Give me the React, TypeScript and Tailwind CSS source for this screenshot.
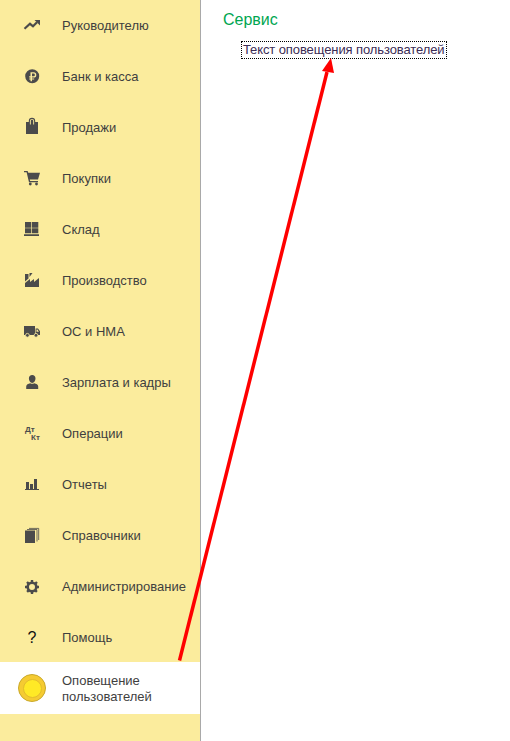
const ICON = "#4b4b4b";
const PANEL = "#fbec9d";

function Svg({ children }: { children: React.ReactNode }) {
  return (
    <svg className="overflow-visible" viewBox="0 0 16 16" width="16" height="16" fill={ICON}>
      {children}
    </svg>
  );
}

const icons: Record<string, React.ReactNode> = {
  trend: (
    <Svg>
      <path d="M0.500 10.800 L6 5.800 L9 8.300 L13 4.300" fill="none" stroke={ICON} strokeWidth="2.200" />
      <path d="M10.500 2 H16 V7.500 Z" />
    </Svg>
  ),
  ruble: (
    <Svg>
      <g transform="translate(0.200 -0.700)">
        <path
          fillRule="evenodd"
          d="M8 1a7 7 0 1 0 0 14A7 7 0 0 0 8 1ZM6.300 4h3.200a2.600 2.600 0 0 1 0 5.200H7.800v.9h2.200v1.100H7.800V13H6.300v-1.800H5v-1.100h1.300v-.9H5V7.900h1.300ZM7.800 5.300v2.600h1.600a1.300 1.300 0 0 0 0-2.600Z"
        />
      </g>
    </Svg>
  ),
  bag: (
    <Svg>
      <path
        fillRule="evenodd"
        d="M2 2h2.800V1a3.200 3.200 0 0 1 6.400 0v1H14v12H2ZM5.900 2v2.500h.9V1a1.200 1.200 0 0 1 2.400 0v3.500h.9V1a2.100 2.100 0 0 0-4.200 0Z"
      />
    </Svg>
  ),
  cart: (
    <Svg>
      <path d="M0 0h3.600L4.300 1.800H16L14 8.500H5.800L6.200 10H14v1.200H5L2.600 1.200H0Z" />
      <circle cx="6.300" cy="13" r="1.400" />
      <circle cx="12.500" cy="13" r="1.400" />
    </Svg>
  ),
  stock: (
    <Svg>
      <path d="M1 0h6.300v5.700H1ZM8 0h6.300v5.700H8ZM1 6.300h6.300v5H1ZM8 6.300h6.300v5H8ZM0 12.300h15V14H0Z" />
    </Svg>
  ),
  factory: (
    <Svg>
      <path d="M1 1h3.500v4.500L1 8.500ZM5.500 0h3L5.500 4ZM1 14v-4l5-4v3l4-3v3l5-4v9Z" />
    </Svg>
  ),
  truck: (
    <Svg>
      <path d="M0 2h11v9H0Z" />
      <path
        fillRule="evenodd"
        d="M11.600 4.500H14l2 2.800V11h-4.400ZM12.500 5.500v2.300h2.400L13.400 5.500Z"
      />
      <circle cx="3.400" cy="11.300" r="1.900" stroke={PANEL} strokeWidth="0.800" />
      <circle cx="12" cy="11.300" r="1.900" stroke={PANEL} strokeWidth="0.800" />
    </Svg>
  ),
  person: (
    <Svg>
      <g transform="translate(0.200 -1)">
        <path d="M8 1c2 0 3.300 1.500 3.300 3.500S10 9 8 9 4.700 6.500 4.700 4.500 6 1 8 1ZM2 15v-2.500C2 10.500 4 10 6 9.300c1.200.7 2.800.7 4 0 2 .7 4 1.200 4 3.200V15Z" />
      </g>
    </Svg>
  ),
  chart: (
    <Svg>
      <path d="M2 5h3v7H2ZM6 7h3v5H6ZM10 2h3v10h-3ZM1 12h14v1H1Z" />
    </Svg>
  ),
  books: (
    <Svg>
      <path d="M1 2.500h10v12.500H1Z" />
      <path d="M3 1.500h10V13.500" fill="none" stroke={ICON} strokeWidth="0.800" />
      <path d="M5 0.400h9.700V12" fill="none" stroke={ICON} strokeWidth="0.800" />
    </Svg>
  ),
  gear: (
    <Svg>
      <circle cx="8" cy="8" r="4.300" fill="none" stroke={ICON} strokeWidth="2.600" />
      <path
        d="M8 1v14M1 8h14M3 3l10 10M13 3L3 13"
        stroke={ICON}
        strokeWidth="2.400"
        strokeDasharray="2.600 8.800"
        fill="none"
      />
    </Svg>
  ),
};

function DtKt() {
  return (
    <div className="relative w-4 h-4 font-bold text-[8px] leading-none text-[#4b4b4b]">
      <span className="absolute left-px top-0">Дт</span>
      <span className="absolute left-[7px] top-[8px]">Кт</span>
    </div>
  );
}

function Coin() {
  return (
    <div className="shrink-0 w-7 h-7 rounded-full bg-[#f5cb32] border border-[#c9a92c] flex items-center justify-center">
      <div className="w-[19px] h-[19px] rounded-full bg-[#ffe926] border border-[#e3bd2c]" />
    </div>
  );
}

const items: { label: string; icon: React.ReactNode }[] = [
  { label: "Руководителю", icon: icons.trend },
  { label: "Банк и касса", icon: icons.ruble },
  { label: "Продажи", icon: icons.bag },
  { label: "Покупки", icon: icons.cart },
  { label: "Склад", icon: icons.stock },
  { label: "Производство", icon: icons.factory },
  { label: "ОС и НМА", icon: icons.truck },
  { label: "Зарплата и кадры", icon: icons.person },
  { label: "Операции", icon: <DtKt /> },
  { label: "Отчеты", icon: icons.chart },
  { label: "Справочники", icon: icons.books },
  { label: "Администрирование", icon: icons.gear },
  { label: "Помощь", icon: <span className="text-base font-normal text-[#111]">?</span> },
];

export default function App() {
  return (
    <div className="relative flex w-[510px] h-[741px] overflow-hidden bg-white font-['Liberation_Sans',Arial,sans-serif]">
      {/* левая панель разделов */}
      <div className="w-[201px] shrink-0 h-full bg-[#fbec9d] border-r border-[#a9a9a9]">
        {items.map((item) => (
          <div key={item.label} className="flex items-center h-[51px] pl-6 gap-[22px] text-[13px] text-[#3f3f3f]">
            <div className="w-4 h-4 shrink-0 flex items-center justify-center">{item.icon}</div>
            <span>{item.label}</span>
          </div>
        ))}
        <div className="flex items-center h-[52px] -mt-px pl-6 gap-[22px] text-[13px] leading-[16px] text-[#3f3f3f] bg-white">
          <div className="w-4 h-4 shrink-0 flex items-center justify-center">
            <Coin />
          </div>
          <span className="pt-px">
            Оповещение
            <br />
            пользователей
          </span>
        </div>
      </div>

      {/* содержимое раздела */}
      <div className="flex-1 pl-[22px] pt-[11px]">
        <div className="text-base leading-[18px] text-[#00a651]">Сервис</div>
        <div className="mt-[12px] ml-[18px] w-[206px] h-[18px] px-px border border-dotted border-black text-[13px] tracking-[-0.1px] leading-[16px] text-[#3b2c55] whitespace-nowrap">
          Текст оповещения пользователей
        </div>
      </div>

      {/* стрелка поверх скриншота */}
      <svg className="absolute left-0 top-0 pointer-events-none" width="510" height="741" viewBox="0 0 510 741">
        <path d="M179.500 660.500 L327 72" stroke="#ff0000" strokeWidth="3.500" fill="none" />
        <path d="M331 58 L334 73 L322 71 Z" fill="#ff0000" />
      </svg>
    </div>
  );
}
